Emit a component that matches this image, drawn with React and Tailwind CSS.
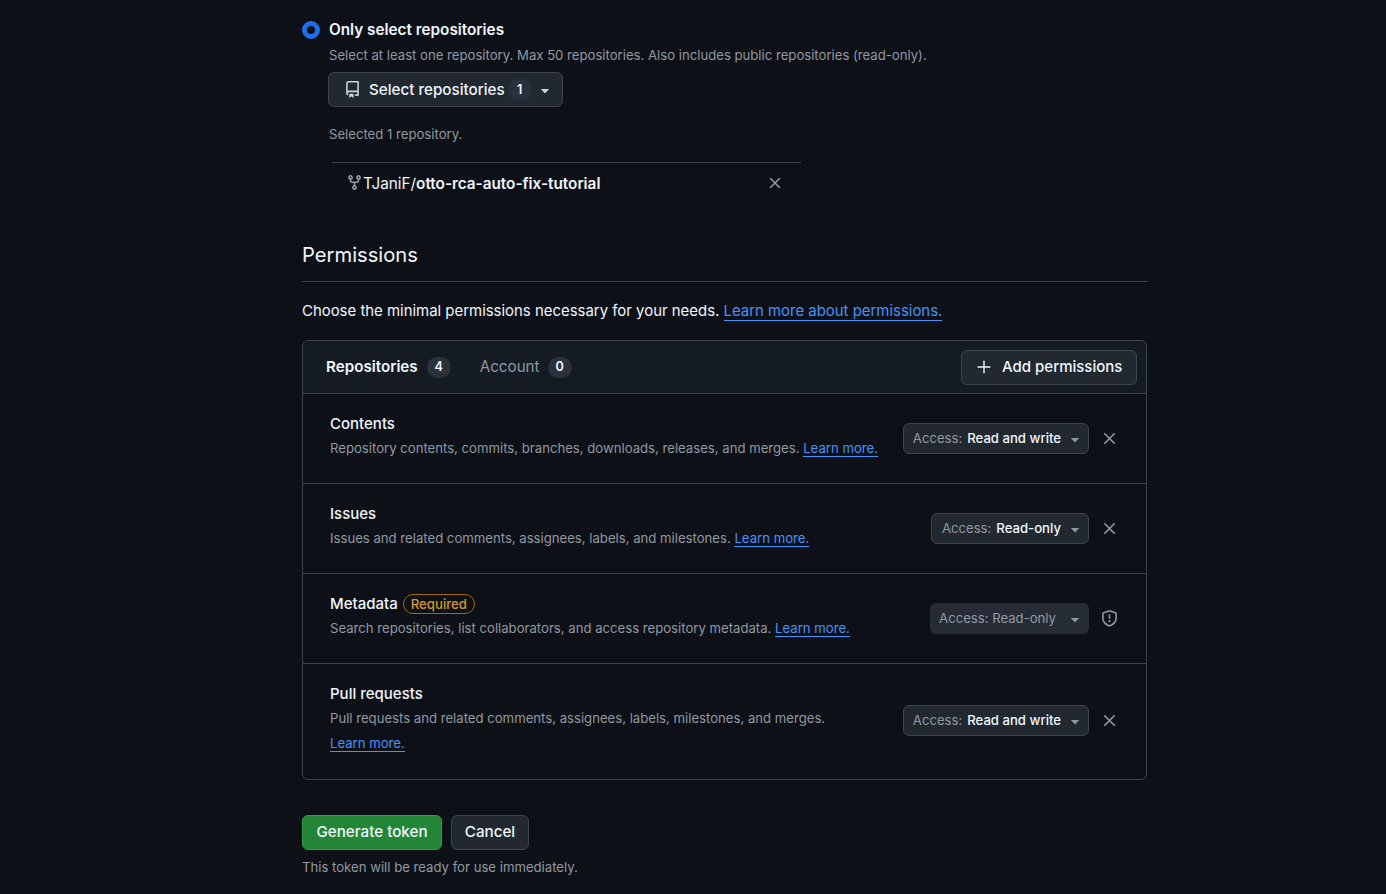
import { Plus, X } from 'lucide-react';

const PERMISSIONS = [
  { name: 'Contents', desc: 'Repository contents, commits, branches, downloads, releases, and merges.', level: 'Read and write' },
  { name: 'Issues', desc: 'Issues and related comments, assignees, labels, and milestones.', level: 'Read-only' },
  { name: 'Metadata', desc: 'Search repositories, list collaborators, and access repository metadata.', level: 'Read-only', required: true },
  { name: 'Pull requests', desc: 'Pull requests and related comments, assignees, labels, milestones, and merges.', level: 'Read and write', wrap: true },
];

function Caret({ className }) {
  return (
    <svg viewBox="0 0 16 16" className={className} fill="currentColor">
      <path d="m4.427 7.427 3.396 3.396a.25.25 0 0 0 .354 0l3.396-3.396A.25.25 0 0 0 11.396 7H4.604a.25.25 0 0 0-.177.427Z" />
    </svg>
  );
}

function RepoIcon() {
  return (
    <svg viewBox="0 0 16 16" className="w-[17px] h-[17px] text-[#c9d1d9]" fill="currentColor">
      <path d="M2 2.5A2.5 2.5 0 0 1 4.5 0h8.75a.75.75 0 0 1 .75.75v12.5a.75.75 0 0 1-.75.75h-2.5a.75.75 0 0 1 0-1.5h1.75v-2h-8a1 1 0 0 0-.714 1.7.75.75 0 1 1-1.072 1.05A2.495 2.495 0 0 1 2 11.5Zm10.5-1h-8a1 1 0 0 0-1 1v6.708A2.486 2.486 0 0 1 4.5 9h8ZM5 12.25a.25.25 0 0 1 .25-.25h3.5a.25.25 0 0 1 .25.25v3.25a.25.25 0 0 1-.4.2l-1.45-1.087a.249.249 0 0 0-.3 0L5.4 15.7a.25.25 0 0 1-.4-.2Z" />
    </svg>
  );
}

function ForkIcon() {
  return (
    <svg viewBox="0 0 16 16" className="w-[17px] h-[17px] shrink-0 text-[#9198a1]" fill="currentColor">
      <path d="M5 5.372v.878c0 .414.336.75.75.75h4.5a.75.75 0 0 0 .75-.75v-.878a2.25 2.25 0 1 1 1.5 0v.878a2.25 2.25 0 0 1-2.25 2.25h-1.5v2.128a2.251 2.251 0 1 1-1.5 0V8.5h-1.5A2.25 2.25 0 0 1 3.5 6.25v-.878a2.25 2.25 0 1 1 1.5 0ZM5 3.25a.75.75 0 1 0-1.5 0 .75.75 0 0 0 1.5 0Zm6.75.75a.75.75 0 1 0 0-1.5.75.75 0 0 0 0 1.5Zm-3 8.75a.75.75 0 1 0-1.5 0 .75.75 0 0 0 1.5 0Z" />
    </svg>
  );
}

function ShieldIcon() {
  return (
    <svg viewBox="0 0 16 16" className="w-[17px] h-[17px] shrink-0 text-[#9198a1]" fill="currentColor">
      <path d="M8.533.133a1.75 1.75 0 0 0-1.066 0l-5.25 1.68A1.75 1.75 0 0 0 1 3.48V7c0 1.566.32 3.182 1.303 4.682.983 1.498 2.585 2.813 5.032 3.855a1.697 1.697 0 0 0 1.33 0c2.447-1.042 4.049-2.357 5.032-3.855C14.68 10.182 15 8.566 15 7V3.48a1.75 1.75 0 0 0-1.217-1.667Zm-.61 1.429a.25.25 0 0 1 .153 0l5.25 1.68a.25.25 0 0 1 .174.238V7c0 1.358-.275 2.666-1.057 3.86-.784 1.194-2.121 2.34-4.366 3.297a.196.196 0 0 1-.154 0c-2.245-.956-3.582-2.104-4.366-3.298C2.775 9.666 2.5 8.36 2.5 7V3.48a.25.25 0 0 1 .174-.237ZM9 10.5a1 1 0 1 1-2 0 1 1 0 0 1 2 0Zm-.25-5.75a.75.75 0 1 0-1.5 0v3a.75.75 0 0 0 1.5 0Z" />
    </svg>
  );
}

function Counter({ n }) {
  return (
    <span className="w-[24px] h-[21px] pt-[1px] rounded-full bg-[#2a313c] flex items-center justify-center text-[12.6px] font-semibold text-[#f0f6fc]">{n}</span>
  );
}

function LearnMore() {
  return <a className="text-[#4493f8] border-b border-[#4493f8] leading-[15px] inline-block">Learn more.</a>;
}

function PermissionRow({ item }) {
  return (
    <div className={`flex items-center border-t border-[#3d444d] pl-[27px] pr-[29px] ${item.wrap ? 'h-[116px] pb-[2px]' : 'h-[90px]'}`}>
      <div className="flex-1 pb-[5px]">
        <div className="flex items-center gap-[5px] text-[15px] font-medium text-[#f0f6fc] leading-[20px]">
          {item.name}
          {item.required && (
            <span className="border border-[#9e6a03] rounded-full px-[7px] h-[20px] text-[13.2px] font-medium leading-[19px] text-[#d29922]">Required</span>
          )}
        </div>
        <p className={`text-[13.15px] text-[#9198a1] mt-[4px] leading-[20px] ${item.wrap ? 'w-[520px]' : ''}`}>
          {item.desc} {item.wrap ? <span className="block mt-[5px]"><LearnMore /></span> : <LearnMore />}
        </p>
      </div>
      {item.required ? (
        <button className="h-[31px] pl-[9px] pr-[5px] rounded-md bg-[#262c36] text-[13.15px] text-[#9198a1] flex items-center gap-[10px]">
          Access: Read-only
          <Caret className="w-[18px] h-[18px]" />
        </button>
      ) : (
        <button className={`h-[31px] pr-[4px] rounded-md bg-[#212830] border border-[#3d444d] text-[13.15px] flex items-center ${item.level === 'Read-only' ? 'pl-[10px]' : 'pl-[9px]'}`}>
          <span className="text-[#9198a1]">Access:</span>
          <span className="ml-[5px] font-medium text-[#f0f6fc]">{item.level}</span>
          <Caret className="w-[18px] h-[18px] text-[#9198a1] ml-[5px]" />
        </button>
      )}
      <span className="ml-[12px] w-[16px] flex justify-center">
        {item.required ? <ShieldIcon /> : <X size={19} className="text-[#9198a1] shrink-0" />}
      </span>
    </div>
  );
}

export default function App() {
  return (
    <div className="min-h-[894px] bg-[#0d1117] font-['Inter',sans-serif] text-[#f0f6fc] overflow-hidden">
      <div className="w-[845px] ml-[302px] pt-[20px]">

        {/* Repository access */}
        <div className="flex items-center h-[20px]">
          <span className="w-[18px] h-[18px] rounded-full border-[5px] border-[#1f6feb] bg-[#0d1117]"></span>
          <span className="ml-[9px] text-[15.3px] font-semibold">Only select repositories</span>
        </div>
        <div className="pl-[27px]">
          <p className="mt-[5px] text-[13.15px] leading-[20px] text-[#9198a1]">Select at least one repository. Max 50 repositories. Also includes public repositories (read-only).</p>
          <button className="mt-[7px] -ml-[1px] h-[35px] w-[235px] rounded-md bg-[#212830] border border-[#3d444d] flex items-center pl-[15px] text-[15.2px] font-medium">
            <RepoIcon />
            <span className="ml-[8px] mt-[1px]">Select repositories</span>
            <span className="ml-[3px]"><Counter n="1" /></span>
            <Caret className="w-[18px] h-[18px] text-[#c9d1d9] ml-[4px]" />
          </button>
          <p className="mt-[17px] text-[13.15px] leading-[20px] text-[#9198a1]">Selected 1 repository.</p>
          <div className="mt-[18px] ml-[3px] w-[469px] border-t border-[#3d444d] h-[40px] flex items-center pl-[14px] pr-[17px] text-[15.3px]">
            <ForkIcon />
            <span className="flex-1 mt-[3px]">TJaniF/<span className="font-semibold">otto-rca-auto-fix-tutorial</span></span>
            <X size={18} className="text-[#9198a1] shrink-0" />
          </div>
        </div>

        {/* Permissions */}
        <div className="mt-[42px] h-[38px] border-b border-[#3d444d] text-[20.2px] leading-[22px]">Permissions</div>
        <p className="mt-[19px] text-[14.93px] leading-[20px]">
          Choose the minimal permissions necessary for your needs. <a className="text-[#4493f8] border-b border-[#4493f8]">Learn more about permissions.</a>
        </p>

        <div className="mt-[19px] border border-[#3d444d] rounded-md">
          <div className="h-[52px] bg-[#151b23] rounded-t-md flex items-center pl-[23px] pr-[9px] text-[15.2px]">
            <span className="font-semibold">Repositories</span>
            <span className="ml-[9px]"><Counter n="4" /></span>
            <span className="ml-[29px] text-[#9198a1]">Account</span>
            <span className="ml-[8px]"><Counter n="0" /></span>
            <button className="ml-auto h-[35px] w-[176px] rounded-md bg-[#212830] border border-[#3d444d] flex items-center pl-[12px] font-medium text-[15px]">
              <Plus size={20} strokeWidth={1.7} className="text-[#f0f6fc]" />
              <span className="ml-[8px]">Add permissions</span>
            </button>
          </div>
          {PERMISSIONS.map((item) => <PermissionRow key={item.name} item={item} />)}
        </div>

        <div className="mt-[35px] flex gap-[9px] text-[15.2px] font-medium">
          <button className="h-[35px] w-[140px] rounded-md bg-[#238636] border border-[#2f9a47]">Generate token</button>
          <button className="h-[35px] w-[78px] rounded-md bg-[#212830] border border-[#3d444d]">Cancel</button>
        </div>
        <p className="mt-[7px] text-[13.15px] leading-[20px] text-[#9198a1]">This token will be ready for use immediately.</p>
      </div>
    </div>
  );
}
